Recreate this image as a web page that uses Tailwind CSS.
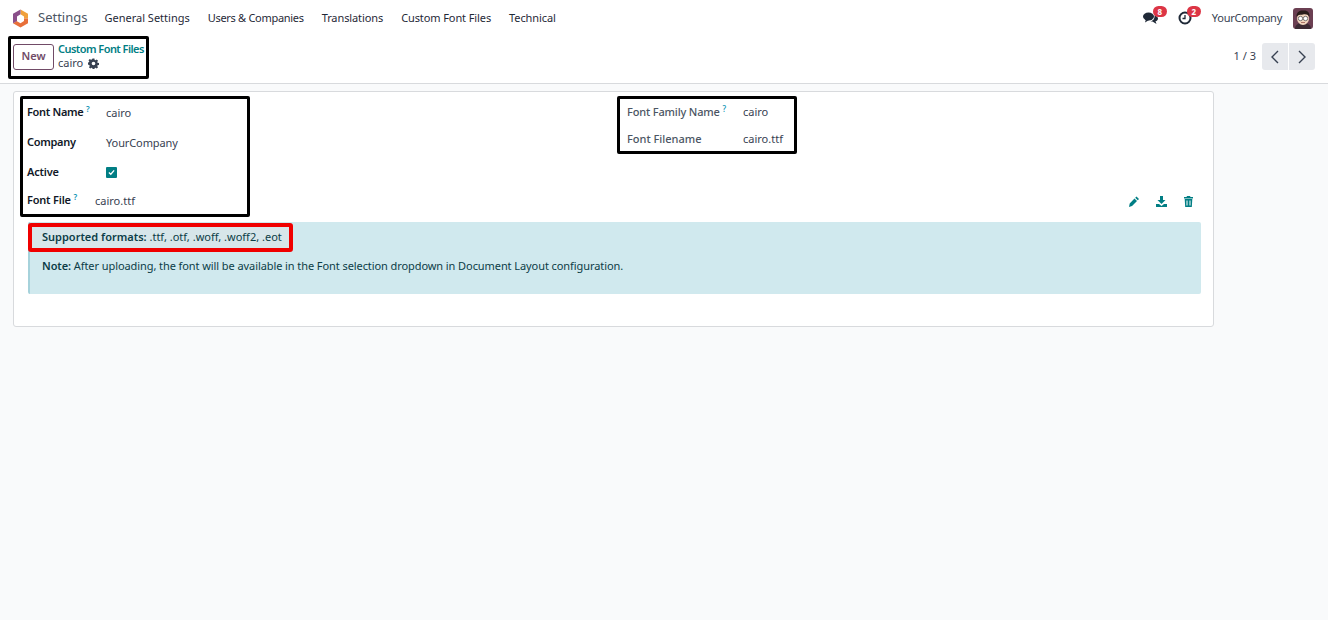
<!DOCTYPE html>
<html lang="en">
<head>
    <meta charset="UTF-8">
    <title>Custom Font Files - Settings</title>
    <script src="https://cdn.jsdelivr.net/npm/@tailwindcss/browser@4"></script>
</head>
<body class="bg-[#f9fafb] min-h-screen font-['Noto_Sans',sans-serif] text-[11px] text-[#374151]">

    <!-- Top navbar -->
    <nav class="bg-white h-[36px] flex items-center pl-[12px] pr-[15px]">
        <svg class="w-[17px] h-[19px]" viewBox="0 0 17 19">
            <path d="M8.5 0.5L16 4.8V9.5H12V7.4L8.500 5.200Z" fill="#f0a03c"/>
            <path d="M16 9.5V14.2L8.5 18.5L1 14.2L4.500 12L8.500 14.200L12 12V9.5Z" fill="#e8703a"/>
            <path d="M1 14.2V4.8L8.5 0.5V5.200L5 7.400V12Z" fill="#8a4f8a"/>
        </svg>
        <span class="ml-[9px] text-[13px] text-[#4b5563]">Settings</span>
        <div class="ml-[17px] flex gap-[18px] text-[#1f2937]">
            <span>General Settings</span>
            <span class="tracking-[-0.3px]">Users &amp; Companies</span>
            <span class="tracking-[-0.1px]">Translations</span>
            <span class="tracking-[-0.1px]">Custom Font Files</span>
            <span class="tracking-[-0.1px]">Technical</span>
        </div>
        <div class="ml-auto flex items-center">
            <div class="relative w-[14px] h-[12px] mr-[21px]">
                <svg class="w-[15px] h-[12px]" viewBox="0 0 15 12" fill="#1f2937">
                    <ellipse cx="5.5" cy="4.5" rx="5.5" ry="4"/>
                    <path d="M3 7L2 10.5L6 8Z"/>
                    <path d="M11.5 3.5C13.5 4 15 5 15 6.5C15 8 14 9 12.5 9.3L13.5 12L9.5 9.5H7.5C9.5 9 12 7 11.5 3.5Z"/>
                </svg>
                <span class="absolute -top-[6px] left-[10px] w-[14px] h-[11px] rounded-full bg-[#dc3545] text-white text-[8px] leading-[11px] text-center font-bold">8</span>
            </div>
            <div class="relative w-[14px] h-[14px] mr-[20px]">
                <svg class="w-[14px] h-[14px]" viewBox="0 0 14 14" fill="none" stroke="#1f2937" stroke-width="2">
                    <circle cx="7" cy="7" r="5.5"/>
                    <path d="M7 4V7.5H4.5" stroke-width="1.3"/>
                </svg>
                <span class="absolute -top-[5px] left-[9px] w-[14px] h-[11px] rounded-full bg-[#dc3545] text-white text-[8px] leading-[11px] text-center font-bold">2</span>
            </div>
            <span class="text-[#374151] tracking-[-0.25px]">YourCompany</span>
            <svg class="ml-[11px] w-[20px] h-[21px] rounded-[3px]" viewBox="0 0 20 21">
                <rect width="20" height="21" fill="#6b3f52"/>
                <path d="M2 21C2 16 6 15 10 15C14 15 18 16 18 21Z" fill="#3b2a33"/>
                <ellipse cx="10" cy="10.5" rx="6" ry="6.5" fill="#f1d5bd"/>
                <path d="M3.5 9C3 3 8 2 11 2.500C15 2.500 17 5 16.500 9C15 6.500 13 6 10 6.500C7 7 5 6.500 3.500 9Z" fill="#2a1d1a"/>
                <circle cx="7.500" cy="10.500" r="2.200" fill="#fff" stroke="#444" stroke-width="0.700"/>
                <circle cx="12.500" cy="10.500" r="2.200" fill="#fff" stroke="#444" stroke-width="0.700"/>
                <path d="M8 14.500H12" stroke="#9a5a50" stroke-width="0.800"/>
            </svg>
        </div>
    </nav>

    <!-- Control panel -->
    <div class="bg-white h-[48px] border-b border-[#d8dadd] pl-[8px] pr-[13px] flex items-start">
        <div class="h-[43px] w-[141px] border-[3px] border-black rounded-[2px] flex items-center pl-[2px] shrink-0">
            <button class="shrink-0 w-[41px] h-[26px] -mt-[2px] border border-[#714b67] rounded-[3px] font-semibold text-[#714b67] bg-white">New</button>
            <div class="ml-[4px] -mt-[3px] leading-[14px] whitespace-nowrap">
                <div class="text-[#017e84] font-semibold tracking-[-0.55px]">Custom Font Files</div>
                <div class="flex items-center gap-[5px]">
                    <span>cairo</span>
                    <svg class="w-[11px] h-[11px]" viewBox="0 0 24 24" fill="#374151">
                        <path fill-rule="evenodd" d="M10 1h4l.6 3.100 1.900.8 2.600-1.800 2.800 2.800-1.800 2.600.8 1.900 3.100.6v4l-3.100.6-.8 1.900 1.800 2.600-2.800 2.800-2.600-1.800-1.900.8-.6 3.100h-4l-.6-3.100-1.900-.8-2.600 1.800-2.800-2.800 1.800-2.600-.8-1.900L-1 14v-4l3.100-.6.8-1.900-1.800-2.600 2.800-2.800 2.600 1.800 1.900-.8zM12 8a4 4 0 100 8 4 4 0 000-8z"/>
                    </svg>
                </div>
            </div>
        </div>
        <div class="ml-auto flex items-center h-[34px] pt-[7px]">
            <span class="mr-[6px]">1 / 3</span>
            <button class="w-[26px] h-[27px] bg-[#e7e9ed] rounded-l-[3px] flex items-center justify-center">
                <svg class="w-[8px] h-[14px]" viewBox="0 0 8 14" fill="none" stroke="#374151" stroke-width="1.400"><path d="M7 1L1 7L7 13"/></svg>
            </button>
            <button class="ml-px w-[26px] h-[27px] bg-[#e7e9ed] rounded-r-[3px] flex items-center justify-center">
                <svg class="w-[8px] h-[14px]" viewBox="0 0 8 14" fill="none" stroke="#374151" stroke-width="1.400"><path d="M1 1L7 7L1 13"/></svg>
            </button>
        </div>
    </div>

    <!-- Form sheet -->
    <div class="ml-[13px] mt-[7px] w-[1201px] h-[236px] bg-white border border-[#d8dadd] rounded-[3px] pt-[4px] pl-[6px] pr-[12px]">
        <div class="flex">
            <div class="w-[230px] h-[121px] border-[3px] border-black rounded-[2px] pl-[4px] shrink-0">
                <div class="flex items-center h-[28px]">
                    <label class="w-[79px] pb-[2px] font-semibold tracking-[-0.3px] text-[#111827]">Font Name <sup class="text-[#0891b2] text-[8px]">?</sup></label>
                    <span>cairo</span>
                </div>
                <div class="flex items-center h-[30px] mt-px">
                    <label class="w-[79px] pb-[2px] font-semibold tracking-[-0.3px] text-[#111827]">Company</label>
                    <span class="tracking-[-0.1px]">YourCompany</span>
                </div>
                <div class="flex items-center h-[29px]">
                    <label class="w-[79px] font-semibold tracking-[-0.2px] text-[#111827]">Active</label>
                    <span class="w-[11px] h-[11px] bg-[#017e84] rounded-[1px] flex items-center justify-center">
                        <svg class="w-[7px] h-[7px]" viewBox="0 0 8 8" fill="none" stroke="#fff" stroke-width="1.500"><path d="M1 4L3.200 6L7 1.500"/></svg>
                    </span>
                </div>
                <div class="flex items-center h-[28px]">
                    <label class="w-[68px] pb-[2px] font-semibold tracking-[-0.2px] text-[#111827]">Font File <sup class="text-[#0891b2] text-[8px]">?</sup></label>
                    <span>cairo.ttf</span>
                </div>
            </div>
            <div class="flex-1 flex flex-col justify-between pl-[367px]">
                <div class="w-[180px] h-[58px] border-[3px] border-black rounded-[2px] pl-[7px]">
                    <div class="flex items-center h-[26px]">
                        <label class="w-[116px] font-medium tracking-[-0.15px] text-[#4b5563]">Font Family Name <sup class="text-[#0891b2] text-[8px]">?</sup></label>
                        <span>cairo</span>
                    </div>
                    <div class="flex items-center h-[26px] mt-px">
                        <label class="w-[116px] font-medium text-[#4b5563]">Font Filename</label>
                        <span>cairo.ttf</span>
                    </div>
                </div>
                <div class="flex justify-end gap-[17px] pr-[8px] pb-[10px]">
                    <svg class="w-[10px] h-[11px]" viewBox="0 0 10 11" fill="#017e84"><path d="M7.500 0.500L10 3L8.800 4.300L6.200 1.800ZM5.500 2.500L8 5L3 10L0 11L0.700 7.500Z"/></svg>
                    <svg class="w-[11px] h-[11px]" viewBox="0 0 11 11" fill="#017e84"><path d="M4 0H7V4H9.500L5.500 8L1.500 4H4ZM0 8H3L5.500 10L8 8H11V11H0Z"/></svg>
                    <svg class="w-[9px] h-[11px]" viewBox="0 0 9 11" fill="#017e84"><path fill-rule="evenodd" d="M3 0H6L6.500 1H9V2.500H0V1H2.500ZM0.700 3H8.300L7.800 11H1.200ZM2.500 4.500V9.500H3.500V4.500ZM5.500 4.500V9.500H6.500V4.500Z"/></svg>
                </div>
            </div>
        </div>
        <!-- Info alert -->
        <div class="mt-[5px] ml-[8px] h-[72px] bg-[#d0e9ee] border-l-2 border-[#a6d2db] rounded-[2px] text-[#0c3d47] flow-root">
            <div class="-ml-[2px] mt-px w-[265px] h-[29px] border-4 border-[#f00000] rounded-[3px] pl-[10px] flex items-center whitespace-nowrap bg-[#d7e6ea]">
                <span><b class="font-semibold">Supported formats:</b> .ttf, .otf, .woff, .woff2, .eot</span>
            </div>
            <div class="mt-[6px] pl-[12px] tracking-[-0.08px]"><b class="font-semibold">Note:</b> After uploading, the font will be available in the Font selection dropdown in Document Layout configuration.</div>
        </div>
    </div>
</body>
</html>
